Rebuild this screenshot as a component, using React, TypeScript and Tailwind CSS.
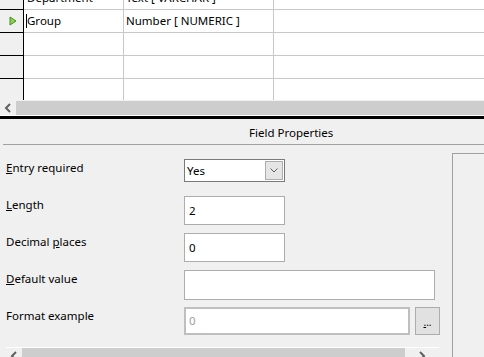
import React from 'react';

const rows = [
  { name: 'Department', type: 'Text [ VARCHAR ]' },
  { name: 'Group', type: 'Number [ NUMERIC ]', current: true },
  { name: '', type: '' },
  { name: '', type: '' },
  { name: '', type: '' },
];

const Arrow = ({ dir }: { dir: 'left' | 'right' }) => (
  <svg width="8" height="10" viewBox="0 0 8 10">
    <path
      d={dir === 'left' ? 'M6 1 L2 5 L6 9' : 'M2 1 L6 5 L2 9'}
      fill="none"
      stroke="#606060"
      strokeWidth="2"
    />
  </svg>
);

const Label = ({ children }: { children: React.ReactNode }) => (
  <div className="w-[184px] shrink-0 pl-[6px] pt-[1px] leading-[16px]">{children}</div>
);

const App = () => {
  return (
    <div
      className="w-[484px] h-[357px] overflow-hidden bg-[#f0f0f0] text-[11.5px] text-black"
      style={{ fontFamily: '"Noto Sans", "Open Sans", sans-serif' }}
    >
      {/* Table design grid */}
      <div className="h-[100px] overflow-hidden bg-white">
        <div className="-mt-[13px]">
          {rows.map((r, i) => (
            <div key={i} className="flex h-[23px]">
              <div className="w-[24px] shrink-0 bg-[#f0f0f0] border-r border-b border-black flex items-center pl-[9px]">
                {r.current && (
                  <svg width="8" height="10" viewBox="0 0 8 10">
                    <polygon points="1,1 7,5 1,9" fill="#8fd14f" stroke="#3f8f1f" strokeWidth="1" />
                  </svg>
                )}
              </div>
              <div className="w-[100px] shrink-0 border-r border-b border-[#c8c8c8] flex items-center pl-[3px]">
                {r.current && <span className="w-px h-[14px] bg-black -ml-[1px]" />}
                <span>{r.name}</span>
              </div>
              <div className="w-[150px] shrink-0 border-r border-b border-[#c8c8c8] flex items-center pl-[2px]">
                {r.type}
              </div>
              <div className="flex-1 border-b border-[#c8c8c8]" />
            </div>
          ))}
        </div>
      </div>

      {/* horizontal scrollbar */}
      <div className="h-[16px] flex border-t border-[#f0f0f0] border-b border-b-white">
        <div className="w-[16px] flex items-center justify-center bg-[#f0f0f0]">
          <Arrow dir="left" />
        </div>
        <div className="flex-1 bg-[#cdcdcd]" />
      </div>
      <div className="h-[3px] bg-black" />

      {/* Field properties */}
      <div className="ml-[3px] h-[26px] border-b border-[#a0a0a0] pl-[246px] pt-[6px] leading-[16px]">
        Field Properties
      </div>

      <div className="flex">
        <div className="w-[452px] shrink-0 pt-[14px]">
          <div className="flex h-[37px]">
            <Label>
              <span className="underline">E</span>ntry required
            </Label>
            <div className="w-[101px] h-[23px] border border-[#7a7a7a] bg-white flex items-center">
              <span className="flex-1 pl-[2px]">Yes</span>
              <div className="w-[18px] h-[19px] mr-[1px] bg-[#e5e5e5] border border-[#adadad] flex items-center justify-center">
                <svg width="8" height="5" viewBox="0 0 8 5">
                  <path d="M0.5 0.5 L4 4 L7.5 0.5" fill="none" stroke="#606060" strokeWidth="1" />
                </svg>
              </div>
            </div>
          </div>
          <div className="flex h-[37px]">
            <Label>
              <span className="underline">L</span>ength
            </Label>
            <div className="w-[101px] h-[29px] border border-[#adadad] bg-white flex items-center pl-[4px]">2</div>
          </div>
          <div className="flex h-[37px]">
            <Label>
              Decimal <span className="underline">p</span>laces
            </Label>
            <div className="w-[101px] h-[29px] border border-[#adadad] bg-white flex items-center pl-[4px]">0</div>
          </div>
          <div className="flex h-[37px]">
            <Label>
              <span className="underline">D</span>efault value
            </Label>
            <div className="w-[251px] h-[30px] border border-[#adadad] bg-white" />
          </div>
          <div className="flex h-[40px]">
            <Label>Format example</Label>
            <div className="w-[226px] h-[28px] border-2 border-[#bfbfbf] bg-white flex items-center pl-[3px] text-[#a0a0a0]">
              0
            </div>
            <div className="ml-[5px] w-[25px] h-[28px] bg-[#e1e1e1] border border-[#adadad] flex items-end justify-center pb-[7px] text-[10px] leading-none">
              <span>
                <span className="underline">.</span>..
              </span>
            </div>
          </div>
          {/* bottom scrollbar */}
          <div className="ml-[6px] w-[433px] h-[16px] border-t border-white flex">
            <div className="w-[16px] flex items-start justify-center pt-[3px]">
              <Arrow dir="left" />
            </div>
            <div className="w-[383px] bg-[#cdcdcd]" />
            <div className="flex-1 flex items-start justify-center pt-[3px]">
              <Arrow dir="right" />
            </div>
          </div>
        </div>
        <div className="flex-1 mt-[8px] h-[300px] border-l border-t border-[#a0a0a0]" />
      </div>
    </div>
  );
};

export default App;
